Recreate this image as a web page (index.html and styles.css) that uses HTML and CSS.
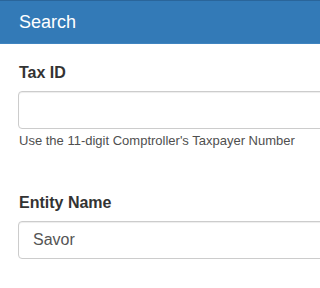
FILE: index.html
```html
<!DOCTYPE html>
<html lang="en">
<head>
<meta charset="utf-8">
<title>Search</title>
<link rel="stylesheet" href="styles.css">
</head>
<body>
<div class="panel">
  <div class="panel-heading">Search</div>
  <div class="panel-body">
    <div class="form-group">
      <label class="control-label" for="taxid">Tax ID</label>
      <input class="form-control" id="taxid" type="text" value="">
      <p class="help-block">Use the 11-digit Comptroller's Taxpayer Number</p>
    </div>
    <div class="form-group">
      <label class="control-label" for="entity">Entity Name</label>
      <input class="form-control" id="entity" type="text" value="Savor">
    </div>
  </div>
</div>
</body>
</html>
```
FILE: styles.css
```css
html, body {
  margin: 0;
  padding: 0;
  background: #fff;
  overflow: hidden;
}
body {
  font-family: "Liberation Sans", Arial, Helvetica, sans-serif;
  color: #333;
}
.panel {
  width: 100%;
  overflow: hidden;
}
.panel-heading {
  box-sizing: border-box;
  height: 44px;
  line-height: 42px;
  padding-left: 19px;
  background: #337ab7;
  border-top: 1px solid #2a659a;
  border-bottom: 1px solid #3f84c0;
  color: #fff;
  font-size: 18px;
}
.panel-body {
  padding: 19px 0 0 18px;
  overflow: hidden;
}
.form-group {
  display: flex;
  flex-direction: column;
  align-items: flex-start;
  margin-bottom: 43px;
}
.control-label {
  display: block;
  font-size: 16px;
  line-height: 20px;
  font-weight: bold;
  color: #333;
  margin: 0 0 8px 1px;
}
.form-control {
  box-sizing: border-box;
  display: block;
  flex: none;
  width: 560px;
  height: 38px;
  margin: 0;
  padding: 0 14px;
  font-family: "Liberation Sans", Arial, Helvetica, sans-serif;
  font-size: 16px;
  color: #555;
  background: #fff;
  border: 1px solid #ccc;
  border-radius: 4px;
  box-shadow: inset 0 1px 1px rgba(0, 0, 0, 0.075);
  outline: none;
}
.help-block {
  margin: 3px 0 0 1px;
  font-size: 13px;
  line-height: 18px;
  color: #4f4f4f;
  white-space: nowrap;
}
```
